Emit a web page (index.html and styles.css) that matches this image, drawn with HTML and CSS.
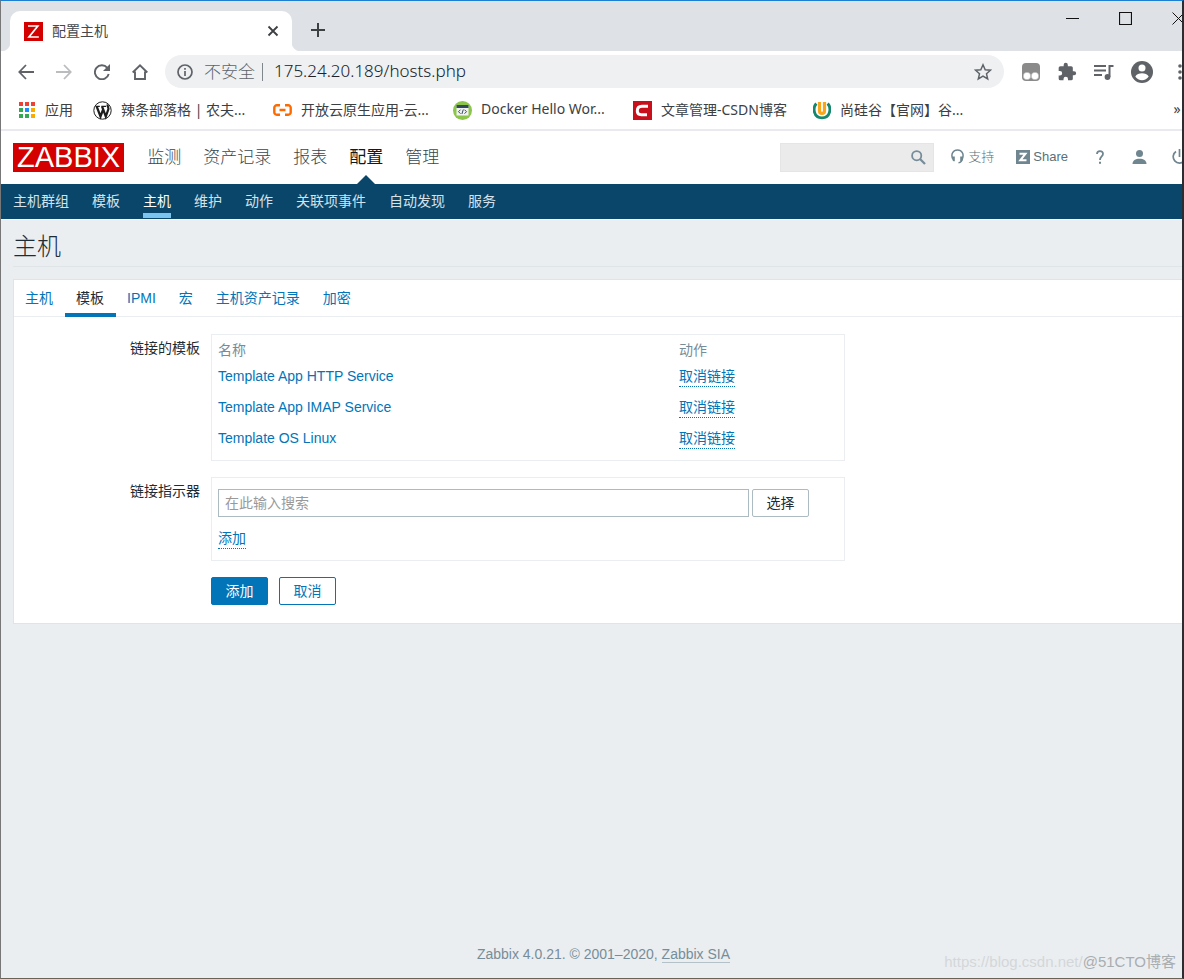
FILE: index.html
```html
<!DOCTYPE html>
<html lang="zh-CN">
<head>
<meta charset="utf-8">
<title>配置主机</title>
<link rel="stylesheet" href="styles.css">
</head>
<body>
<div class="window">
  <div class="tabstrip">
    <div class="browser-tab">
      <svg class="favicon" width="19" height="19" viewBox="0 0 19 19"><path fill="#d40000" d="M0 0h19v19H0z"/><path d="M4 4h9.800L5 15h9.800" fill="none" stroke="#fff" stroke-width="1.700"/></svg>
      <span class="browser-tab-title">配置主机</span>
      <button class="icon-btn" aria-label="关闭标签页"><svg width="12" height="12" viewBox="0 0 12 12"><path d="M1.500 1.500l9 9M10.500 1.500l-9 9" stroke="#3c4043" stroke-width="1.800"/></svg></button>
    </div>
    <button class="icon-btn new-tab" aria-label="新标签页"><svg width="14" height="14" viewBox="0 0 14 14"><path d="M7 0v14M0 7h14" stroke="#3c4043" stroke-width="2"/></svg></button>
    <div class="window-controls">
      <button class="icon-btn" aria-label="最小化"><svg width="13" height="13" viewBox="0 0 13 13"><path d="M0 6.500h13" stroke="#111"/></svg></button>
      <button class="icon-btn" aria-label="最大化"><svg width="13" height="13" viewBox="0 0 13 13"><path d="M.5.5h12v12H.5z" fill="none" stroke="#111" stroke-width="1.200"/></svg></button>
      <button class="icon-btn edge" aria-label="关闭"><svg width="13" height="13" viewBox="0 0 13 13"><path d="M.5.5l12 12M12.500.5l-12 12" stroke="#111"/></svg></button>
    </div>
  </div>

  <div class="toolbar">
    <div class="nav-buttons">
      <button class="icon-btn" aria-label="后退"><svg width="16" height="16" viewBox="0 0 16 16" fill="none" stroke="#5f6368" stroke-width="1.800"><path d="M16 8H1.500M8 1L1.300 8 8 15"/></svg></button>
      <button class="icon-btn" aria-label="前进"><svg width="16" height="16" viewBox="0 0 16 16" fill="none" stroke="#babcbe" stroke-width="1.800"><path d="M0 8h14.500M8 1l6.700 7L8 15"/></svg></button>
      <button class="icon-btn" aria-label="重新加载"><svg width="16" height="16" viewBox="0 0 16 16"><path d="M13.300 3.800A7 7 0 1 0 14.700 10" fill="none" stroke="#5f6368" stroke-width="1.900"/><path d="M16 0v7H9z" fill="#5f6368"/></svg></button>
      <button class="icon-btn" aria-label="主页"><svg width="16" height="16" viewBox="0 0 16 16" fill="none" stroke="#5f6368" stroke-width="1.900"><path d="M.7 8.500L8 1.400l7.300 7.100M3 7.500V15h10V7.500"/></svg></button>
    </div>
    <div class="omnibox">
      <svg width="16" height="16" viewBox="0 0 16 16"><circle cx="8" cy="8" r="7" fill="none" stroke="#5f6368" stroke-width="1.700"/><path d="M8 7v5M8 4v1.800" stroke="#5f6368" stroke-width="1.700"/></svg>
      <span class="insecure">不安全</span>
      <span class="divider"></span>
      <input class="url" type="text" aria-label="地址" value="175.24.20.189/hosts.php">
      <button class="icon-btn" aria-label="收藏"><svg width="18" height="18" viewBox="0 0 18 18"><path d="M9 1.800l2.200 4.900 5.300.5-4 3.600 1.200 5.200L9 13.200 4.300 16l1.200-5.200-4-3.600 5.300-.5z" fill="none" stroke="#5f6368" stroke-width="1.500"/></svg></button>
    </div>
    <div class="extensions">
      <button class="icon-btn" aria-label="扩展"><svg width="18" height="18" viewBox="0 0 18 18"><rect width="18" height="18" rx="4" fill="#8a8a8a"/><circle cx="5" cy="13" r="3.800" fill="#fff" stroke="#999" stroke-width=".5"/><circle cx="13" cy="13" r="3.800" fill="#fff" stroke="#999" stroke-width=".5"/></svg></button>
      <button class="icon-btn" aria-label="扩展程序"><svg width="20" height="20" viewBox="0 0 24 24"><path fill="#5f6368" d="M20.500 11H19V7a2 2 0 0 0-2-2h-4V3.500a2.500 2.500 0 0 0-5 0V5H4a2 2 0 0 0-2 2v3.800h1.500a2.700 2.700 0 0 1 0 5.400H2V20a2 2 0 0 0 2 2h3.800v-1.500a2.700 2.700 0 0 1 5.400 0V22H17a2 2 0 0 0 2-2v-4h1.500a2.500 2.500 0 0 0 0-5z"/></svg></button>
      <button class="icon-btn" aria-label="媒体"><svg width="20" height="16" viewBox="0 0 20 16"><path d="M0 2h12M0 6.500h12M0 11h8" stroke="#5f6368" stroke-width="1.800"/><path d="M15.500 13V2H19.500" fill="none" stroke="#5f6368" stroke-width="2"/><circle cx="13.500" cy="13" r="2.900" fill="#5f6368"/></svg></button>
      <button class="icon-btn" aria-label="用户"><svg width="22" height="22" viewBox="0 0 22 22"><circle cx="11" cy="11" r="11" fill="#5f6368"/><circle cx="11" cy="7" r="3.500" fill="#fff"/><path d="M4.300 15.500c1.200-2.200 4-3.300 6.700-3.300s5.500 1.100 6.700 3.300a8 8 0 0 1-13.400 0z" fill="#fff"/></svg></button>
      <button class="icon-btn edge" aria-label="菜单"><svg width="4" height="16" viewBox="0 0 4 16" fill="#5f6368"><circle cx="2" cy="2" r="1.800"/><circle cx="2" cy="8" r="1.800"/><circle cx="2" cy="14" r="1.800"/></svg></button>
    </div>
  </div>

  <div class="bookmarks">
    <a class="bookmark apps" href="#"><svg width="16" height="16" viewBox="0 0 16 16"><path fill="#ea4335" d="M0 0h4v4H0zM6 0h4v4H6zM12 0h4v4h-4z"/><path fill="#34a853" d="M0 6h4v4H0zM0 12h4v4H0zM6 12h4v4H6z"/><path fill="#1a8cff" d="M6 6h4v4H6z"/><path fill="#fbab00" d="M12 6h4v4h-4zM12 12h4v4h-4z"/></svg><span>应用</span></a>
    <a class="bookmark" href="#"><svg width="19" height="19" viewBox="0 0 19 19"><circle cx="9.500" cy="9.500" r="8.700" fill="#fff" stroke="#1d1d1d" stroke-width="1"/><path d="M2.500 5.300h4.300M8.300 5.300h4.800" stroke="#1d1d1d" stroke-width="1.200"/><path d="M3.700 5.500L7.500 15.500l2.600-7M9.100 5.500l3.700 10 2.600-7.300c.5-1.900-1.500-3-.6-4.800" fill="none" stroke="#1d1d1d" stroke-width="2.200"/></svg><span>辣条部落格 | 农夫...</span></a>
    <a class="bookmark" href="#"><svg width="19" height="12" viewBox="0 0 19 12" fill="none" stroke="#ff6a00" stroke-width="2.400"><path d="M7 1.300H4A2.500 2.500 0 0 0 1.300 4v4A2.500 2.500 0 0 0 4 10.700h3M12 1.300h3A2.500 2.500 0 0 1 17.700 4v4a2.500 2.500 0 0 1-2.700 2.700h-3M6.500 6h6"/></svg><span>开放云原生应用-云...</span></a>
    <a class="bookmark" href="#"><svg width="19" height="19" viewBox="0 0 19 19"><circle cx="9.500" cy="9.500" r="9.500" fill="#8cc54b"/><path fill="#f1f3f3" d="M3.500 4.500h12v10h-12z"/><path fill="#34495e" d="M3.500 4h12v3h-12z"/><path d="M7.500 8.700l-2 2 2 2M11.500 8.700l2 2-2 2M10.300 8.500l-1.400 4.500" fill="none" stroke="#34495e"/></svg><span>Docker Hello Wor...</span></a>
    <a class="bookmark" href="#"><svg width="19" height="19" viewBox="0 0 19 19"><path fill="#c8101c" d="M0 0h19v19H0z"/><path d="M15 5.300H9C5.500 5.300 4.300 7.500 4.300 10c0 2.500 1.500 3.700 4 3.700H14" fill="none" stroke="#fff" stroke-width="3"/></svg><span>文章管理-CSDN博客</span></a>
    <a class="bookmark" href="#"><svg width="18" height="19" viewBox="0 0 18 19" fill="none"><path d="M3.300 2.500C-.5 7 .5 16.800 9 16.800S18.500 7 14.700 2.500" stroke="#16866c" stroke-width="2.800"/><path d="M6.500 1v8.500c0 4 5 4 5 0V1" stroke="#f9a51a" stroke-width="3.200"/></svg><span>尚硅谷【官网】谷...</span></a>
    <button class="bookmark-more edge" aria-label="更多书签">»</button>
  </div>

  <div class="page">
    <header class="header">
      <a class="logo" href="#">ZABBIX</a>
      <nav class="main-menu">
        <a href="#">监测</a><a href="#">资产记录</a><a href="#">报表</a><a class="active" href="#">配置</a><a href="#">管理</a>
      </nav>
      <form class="search">
        <input type="text" aria-label="搜索">
        <button type="button" class="icon-btn" aria-label="搜索"><svg width="15" height="15" viewBox="0 0 15 15" fill="none" stroke="#768d99"><circle cx="5.700" cy="5.700" r="4.600" stroke-width="1.800"/><path d="M9 9l5 5" stroke-width="2.300"/></svg></button>
      </form>
      <div class="user-menu">
        <a class="support" href="#"><svg width="13" height="15" viewBox="0 0 13 15"><path d="M1.500 9.500C-.2 5 2 1 6.500 1s6.700 4 5 8.500c-.4 2.500-1.500 4-4 4.300" fill="none" stroke="#6f858f" stroke-width="1.500"/><path fill="#6f858f" d="M1 7.500h2.800v4.700H2.500C1.300 11.500.8 9.500 1 7.500zM12 7.500H9.200v4.700h1.300c1.200-.7 1.700-2.700 1.500-4.700z"/></svg><span>支持</span></a>
        <a class="share" href="#"><svg width="14" height="14" viewBox="0 0 14 14"><path fill="#6f858f" d="M0 0h14v14H0z"/><path d="M3.500 3.700h6L4.300 10.300h6.200" fill="none" stroke="#fff" stroke-width="2"/></svg><span>Share</span></a>
        <a class="help" href="#" aria-label="帮助"><svg width="8" height="14" viewBox="0 0 8 14"><path d="M1 4C1 0 7 .2 7 3.700 7 6.500 4 6.300 4 10" fill="none" stroke="#6f858f" stroke-width="1.800"/><path fill="#6f858f" d="M3 11.700h2v2H3z"/></svg></a>
        <a class="profile" href="#" aria-label="用户"><svg width="15" height="14" viewBox="0 0 15 14" fill="#6f858f"><circle cx="7.500" cy="3.500" r="3.500"/><path d="M.5 14c0-3.500 3-5.200 7-5.200s7 1.700 7 5.200z"/></svg></a>
        <a class="edge power" href="#" aria-label="登出"><svg width="15" height="15" viewBox="0 0 15 15" fill="none" stroke="#6f858f" stroke-width="1.700"><path d="M7.500 0v8M4 2.500a6.300 6.300 0 1 0 7 0"/></svg></a>
      </div>
    </header>
    <nav class="sub-menu">
      <a href="#">主机群组</a><a href="#">模板</a><a class="selected" href="#">主机</a><a href="#">维护</a><a href="#">动作</a><a href="#">关联项事件</a><a href="#">自动发现</a><a href="#">服务</a>
    </nav>

    <main class="content">
      <h1>主机</h1>
      <section class="card">
        <nav class="tabs">
          <a href="#">主机</a><a class="current" href="#">模板</a><a href="#">IPMI</a><a href="#">宏</a><a href="#">主机资产记录</a><a href="#">加密</a>
        </nav>
        <form class="form">
          <span class="label">链接的模板</span>
          <div class="box linked">
            <table>
              <thead><tr><th class="name">名称</th><th>动作</th></tr></thead>
              <tbody>
                <tr><td><a href="#">Template App HTTP Service</a></td><td><button type="button" class="link">取消链接</button></td></tr>
                <tr><td><a href="#">Template App IMAP Service</a></td><td><button type="button" class="link">取消链接</button></td></tr>
                <tr><td><a href="#">Template OS Linux</a></td><td><button type="button" class="link">取消链接</button></td></tr>
              </tbody>
            </table>
          </div>
          <label class="label" for="templates">链接指示器</label>
          <div class="box picker">
            <div class="picker-row">
              <input id="templates" type="text" placeholder="在此输入搜索">
              <button type="button" class="btn grey">选择</button>
            </div>
            <button type="button" class="link">添加</button>
          </div>
          <div class="actions">
            <button type="button" class="btn primary">添加</button>
            <button type="button" class="btn">取消</button>
          </div>
        </form>
      </section>
    </main>
    <footer class="footer">Zabbix 4.0.21. © 2001–2020, <a href="#">Zabbix SIA</a></footer>
  </div>
  <div class="watermark"><span class="faint">https://blog.csdn.net/</span><span>@51CTO博客</span></div>
</div>
</body>
</html>
```
FILE: styles.css
```css
* { box-sizing: border-box; }
body {
  margin: 0;
  overflow: hidden;
  font-family: "Liberation Sans", "Noto Sans CJK SC", sans-serif;
  font-size: 14px;
  color: #1f2c33;
}
a { color: #0275b8; text-decoration: none; }
button, input { font: inherit; }
svg { display: block; flex: none; }

.window {
  position: relative;
  display: flex;
  flex-direction: column;
  height: 100vh;
  overflow: hidden;
  border: 1px solid #777;
  border-top-color: #1c7fd0;
  border-right: 2px solid #2b2d30;
  border-bottom-color: #6b6256;
}
.icon-btn {
  display: flex;
  flex: none;
  padding: 0;
  border: 0;
  background: none;
}
.edge { width: 10px; overflow: visible; }

/* Browser chrome */
.tabstrip {
  display: flex;
  flex: none;
  align-items: center;
  height: 50px;
  padding-left: 9px;
  background: #dee1e6;
}
.browser-tab {
  position: relative;
  display: flex;
  align-items: center;
  align-self: flex-end;
  gap: 9px;
  width: 282px;
  height: 40px;
  padding: 0 13px 0 14px;
  border-radius: 10px 10px 0 0;
  background: #fff;
}
.browser-tab::before,
.browser-tab::after {
  content: "";
  position: absolute;
  bottom: 0;
  width: 9px;
  height: 9px;
}
.browser-tab::before {
  right: 100%;
  background: radial-gradient(circle at 0 0, #dee1e6 9px, #fff 10px);
}
.browser-tab::after {
  left: 100%;
  background: radial-gradient(circle at 100% 0, #dee1e6 9px, #fff 10px);
}
.browser-tab-title { flex: 1; padding-bottom: 2px; color: #45494d; }
.new-tab { margin: 8px 0 0 19px; }
.window-controls {
  display: flex;
  align-self: flex-start;
  gap: 40px;
  margin-left: auto;
  padding-top: 11px;
}
.toolbar {
  display: flex;
  flex: none;
  align-items: center;
  height: 41px;
  padding-left: 17px;
  background: #fff;
}
.nav-buttons { display: flex; gap: 22px; }
.omnibox {
  display: flex;
  flex: 1;
  align-items: center;
  height: 33px;
  margin: 0 18px 0 17px;
  padding: 0 12px;
  border-radius: 17px;
  background: #eef0f2;
  font-family: "Noto Sans", "Noto Sans CJK SC", sans-serif;
  font-size: 17px;
}
.insecure { margin-left: 11px; padding-bottom: 2px; color: #5f6368; font-weight: 300; }
.divider { width: 1px; height: 18px; margin: 0 11px 0 7px; background: #80868b; }
.url {
  flex: 1;
  min-width: 0;
  padding: 0 0 2px;
  border: 0;
  background: none;
  color: #202124;
  font-weight: 300;
}
.extensions { display: flex; align-items: center; gap: 17px; }
.extensions .edge { margin-left: 8px; width: 4px; }
.bookmarks {
  display: flex;
  flex: none;
  align-items: center;
  height: 39px;
  padding: 0 0 1px 18px;
  border-bottom: 2px solid #e8eaed;
  background: #fff;
  font-family: "Noto Sans", "Noto Sans CJK SC", sans-serif;
}
.bookmark {
  display: flex;
  flex: none;
  align-items: center;
  gap: 9px;
  width: 180px;
  color: #3c4043;
  white-space: nowrap;
}
.bookmark span { padding-bottom: 3px; }
.bookmark.apps { gap: 10px; width: 74px; }
.bookmark-more {
  margin-left: auto;
  padding: 0 0 4px;
  border: 0;
  background: none;
  color: #3c4043;
}

/* Zabbix header */
.page {
  display: flex;
  flex: 1;
  flex-direction: column;
  background: #ebeef0;
}
.header {
  display: flex;
  align-items: center;
  height: 53px;
  padding-left: 12px;
  background: #fff;
}
.logo {
  padding: 0 4px;
  background: #d40000;
  color: #fff;
  font-size: 29px;
  line-height: 29px;
}
.main-menu {
  display: flex;
  align-self: stretch;
  gap: 22px;
  margin-left: 23px;
  font-size: 17px;
  font-weight: 300;
  line-height: 54px;
}
.main-menu a { position: relative; color: #37474f; }
.main-menu .active { color: #0f1b21; font-weight: 400; }
.main-menu .active::after {
  content: "";
  position: absolute;
  bottom: 0;
  left: 50%;
  margin-left: -9px;
  border: 9px solid transparent;
  border-top: 0;
  border-bottom-color: #0a466a;
}
.search {
  display: flex;
  align-items: center;
  width: 154px;
  height: 29px;
  margin-left: auto;
  padding-right: 7px;
  border: 1px solid #e3e5e7;
  background: #ebebeb;
}
.search input { flex: 1; min-width: 0; border: 0; background: none; }
.user-menu {
  display: flex;
  align-items: center;
  margin-left: 17px;
  padding-bottom: 2px;
  font-size: 13px;
  font-weight: 300;
}
.user-menu a { display: flex; align-items: center; gap: 4px; color: #5b6f79; }
.user-menu .support span { padding-bottom: 3px; }
.user-menu .share { margin-left: 22px; gap: 3px; }
.user-menu .help { margin-left: 28px; }
.user-menu .profile { margin-left: 28px; }
.user-menu .power { margin-left: 25px; }
.sub-menu {
  display: flex;
  gap: 23px;
  height: 36px;
  padding: 0 12px;
  border-bottom: 1px solid #f4f6f7;
  background: #0a466a;
  line-height: 34px;
}
.sub-menu a { height: 34px; color: #d5e2ea; }
.sub-menu .selected { border-bottom: 5px solid #7cc4f0; color: #fff; }

/* Content */
.content { padding: 0 0 0 12px; }
h1 {
  margin: 0;
  height: 47px;
  border-bottom: 1px solid #dfe4e7;
  font-size: 24px;
  font-weight: 300;
  line-height: 54px;
}
.card {
  margin-top: 12px;
  border: 1px solid #dfe4e7;
  border-right: 0;
  background: #fff;
}
.tabs {
  display: flex;
  height: 37px;
  border-bottom: 1px solid #ebeef0;
  line-height: 36px;
}
.tabs a { height: 37px; padding: 0 12px 0 11px; }
.tabs .current { border-bottom: 4px solid #0275b8; color: #1f2c33; }
.form {
  display: grid;
  grid-template-columns: 186px minmax(0, 634px);
  gap: 16px 11px;
  padding: 17px 0 18px;
}
.label { padding-top: 4px; line-height: 20px; text-align: right; }
.box { border: 1px solid #ebeef0; }
.linked { padding: 4px 0 6px 6px; }
table { width: 100%; border-collapse: collapse; }
th {
  height: 22px;
  padding: 0;
  color: #768d99;
  font-weight: 400;
  line-height: 22px;
  text-align: left;
}
.name { width: 461px; }
td { height: 31px; padding: 5px 0; vertical-align: top; line-height: 20px; }
.link {
  display: block;
  padding: 0;
  border: 0;
  border-bottom: 1px dotted #0275b8;
  background: none;
  color: #0275b8;
  line-height: 20px;
}
.picker { padding: 11px 35px 11px 6px; }
.picker-row { display: flex; gap: 3px; margin-bottom: 11px; }
.picker input {
  flex: 1;
  min-width: 0;
  height: 28px;
  padding: 0 6px;
  border: 1px solid #acbbc2;
}
.picker input::placeholder { color: #999; }
.btn {
  width: 57px;
  height: 28px;
  padding: 0 0 3px;
  border: 1px solid #0275b8;
  border-radius: 2px;
  background: #fff;
  color: #0275b8;
}
.btn.grey { border-color: #acbbc2; color: #1f2c33; }
.btn.primary { background: #0275b8; color: #fff; }
.actions { display: flex; grid-column: 2; gap: 11px; }
.footer {
  margin-top: auto;
  padding: 0 0 14px 24px;
  color: #768d99;
  line-height: 20px;
  text-align: center;
}
.footer a { border-bottom: 1px solid #b5c1c8; color: #768d99; }
.watermark {
  position: absolute;
  right: 6px;
  bottom: 6px;
  color: #a9adb0;
  font-size: 15px;
  line-height: 20px;
}
.watermark .faint { color: #d3d7da; }
```
